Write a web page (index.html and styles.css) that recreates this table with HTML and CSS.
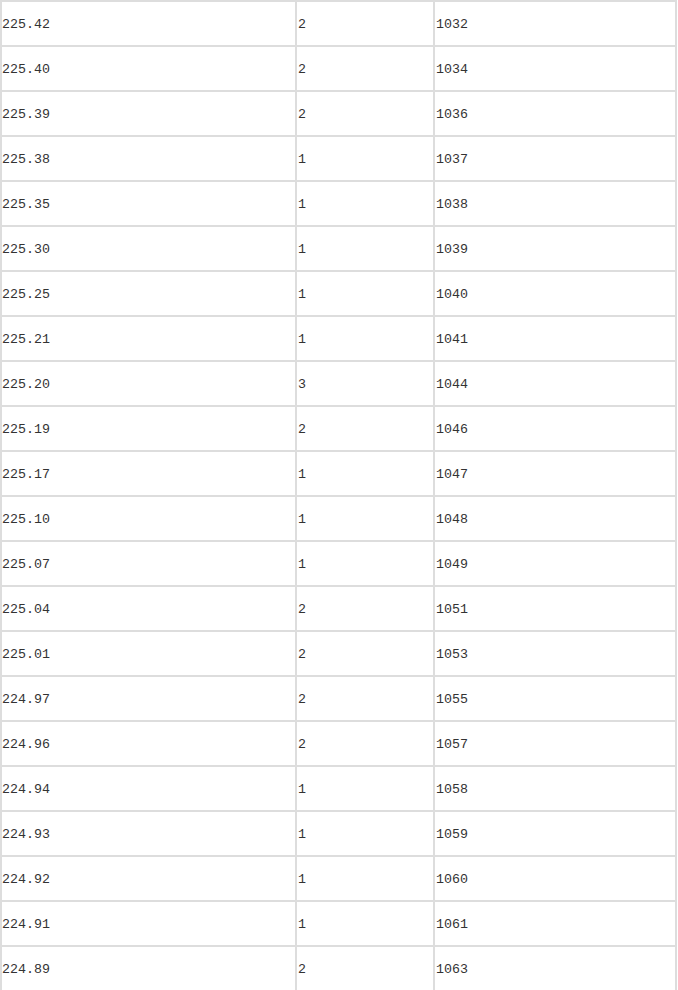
FILE: index.html
```html
<!DOCTYPE html>
<html lang="zh-CN">
<head>
<meta charset="utf-8">
<title>价格表</title>
<link rel="stylesheet" href="styles.css">
</head>
<body>
<table class="price-table">
<tbody>
<tr><td class="c1">225.42</td><td class="c2">2</td><td class="c3">1032</td></tr>
<tr><td class="c1">225.40</td><td class="c2">2</td><td class="c3">1034</td></tr>
<tr><td class="c1">225.39</td><td class="c2">2</td><td class="c3">1036</td></tr>
<tr><td class="c1">225.38</td><td class="c2">1</td><td class="c3">1037</td></tr>
<tr><td class="c1">225.35</td><td class="c2">1</td><td class="c3">1038</td></tr>
<tr><td class="c1">225.30</td><td class="c2">1</td><td class="c3">1039</td></tr>
<tr><td class="c1">225.25</td><td class="c2">1</td><td class="c3">1040</td></tr>
<tr><td class="c1">225.21</td><td class="c2">1</td><td class="c3">1041</td></tr>
<tr><td class="c1">225.20</td><td class="c2">3</td><td class="c3">1044</td></tr>
<tr><td class="c1">225.19</td><td class="c2">2</td><td class="c3">1046</td></tr>
<tr><td class="c1">225.17</td><td class="c2">1</td><td class="c3">1047</td></tr>
<tr><td class="c1">225.10</td><td class="c2">1</td><td class="c3">1048</td></tr>
<tr><td class="c1">225.07</td><td class="c2">1</td><td class="c3">1049</td></tr>
<tr><td class="c1">225.04</td><td class="c2">2</td><td class="c3">1051</td></tr>
<tr><td class="c1">225.01</td><td class="c2">2</td><td class="c3">1053</td></tr>
<tr><td class="c1">224.97</td><td class="c2">2</td><td class="c3">1055</td></tr>
<tr><td class="c1">224.96</td><td class="c2">2</td><td class="c3">1057</td></tr>
<tr><td class="c1">224.94</td><td class="c2">1</td><td class="c3">1058</td></tr>
<tr><td class="c1">224.93</td><td class="c2">1</td><td class="c3">1059</td></tr>
<tr><td class="c1">224.92</td><td class="c2">1</td><td class="c3">1060</td></tr>
<tr><td class="c1">224.91</td><td class="c2">1</td><td class="c3">1061</td></tr>
<tr><td class="c1">224.89</td><td class="c2">2</td><td class="c3">1063</td></tr>
</tbody>
</table>
</body>
</html>
```
FILE: styles.css
```css
html, body {
  margin: 0;
  padding: 0;
  background: #ffffff;
}

.price-table {
  border-collapse: separate;
  border-spacing: 0;
  border: 1px solid #dddddd;
  table-layout: fixed;
  width: 677px;
  font-family: "Liberation Mono", "Noto Sans CJK SC", monospace;
  font-size: 13.3px;
  color: #333333;
}

.price-table td {
  box-sizing: border-box;
  border: 1px solid #dddddd;
  height: 45px;
  padding: 2px 0 0 0;
  vertical-align: middle;
  text-align: left;
  white-space: nowrap;
}

.price-table .c1 { width: 295px; }
.price-table .c2 { width: 138px; padding-left: 1px; }
.price-table .c3 { width: 242px; padding-left: 1px; }
```
